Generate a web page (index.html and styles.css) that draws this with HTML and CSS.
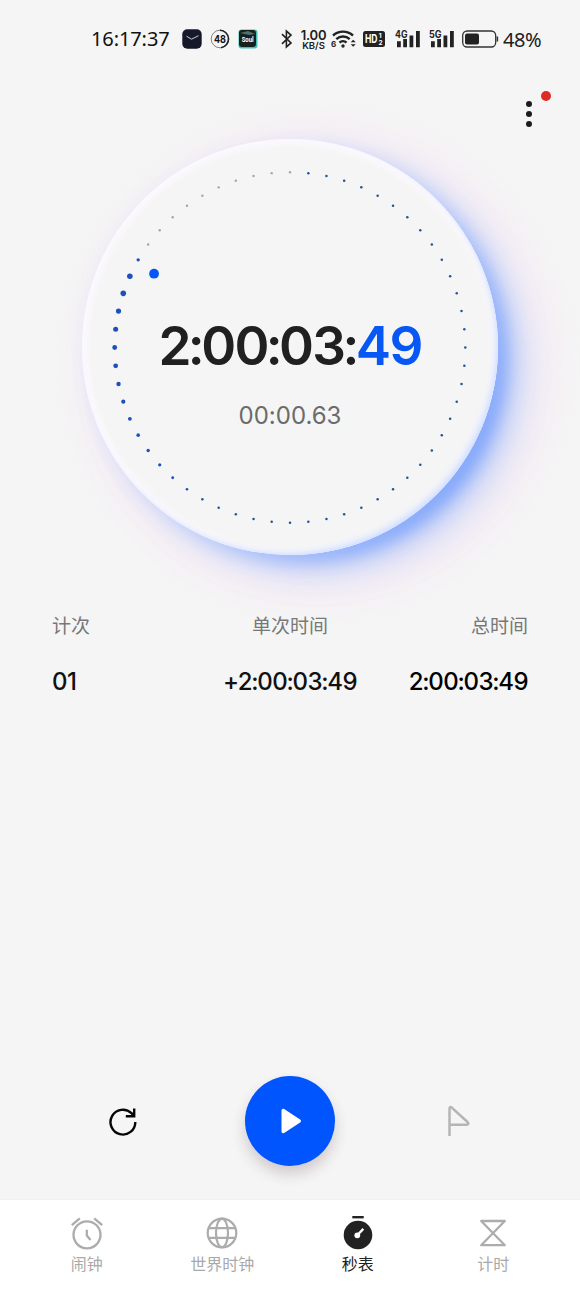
FILE: index.html
```html
<!DOCTYPE html>
<html lang="zh-CN">
<head>
<meta charset="utf-8">
<title>秒表</title>
<link rel="stylesheet" href="styles.css">
</head>
<body>
<div class="screen">
  <div class="status">
    <span class="clock">16:17:37</span>
    <svg class="app-clock" width="20" height="20" viewBox="0 0 20 20"><rect x=".3" y=".3" width="19.4" height="19.4" rx="5" fill="#17192b"/><path d="M4.5 7.2l5 3 7-3.5" fill="none" stroke="#c8ccd6" stroke-width="1"/></svg>
    <svg class="app-48" width="20" height="20" viewBox="0 0 20 20"><circle cx="10" cy="10" r="8.8" fill="none" stroke="#666" stroke-width=".8"/><path d="M10 1.2a8.8 8.8 0 0 1 1 17.5" fill="none" stroke="#222" stroke-width="1.6"/><text class="badge-num" x="10" y="13.8" text-anchor="middle" textLength="12" lengthAdjust="spacingAndGlyphs">48</text></svg>
    <svg class="app-soul" width="20" height="20" viewBox="0 0 20 20"><rect x=".5" y=".5" width="19" height="19" rx="3" fill="#45bfb5"/><rect x="1" y="1" width="17" height="17" rx="3" fill="#14211f"/><path d="M2 4l8-2 7 3-6 1z" fill="#53716c"/><text class="soul-text" x="9.700" y="12.800" text-anchor="middle" textLength="12" lengthAdjust="spacingAndGlyphs">Soul</text></svg>
    <svg class="bt" width="12" height="20" viewBox="0 0 12 20"><path d="M1 5.200l9 8.700-4.600 4V2.100l4.600 4L1 14.800" fill="none" stroke="#222" stroke-width="1.600"/></svg>
    <span class="speed"><b>1.00</b><i>KB/S</i></span>
    <svg class="wifi" width="26" height="20" viewBox="0 0 26 20"><g fill="none" stroke="#222" stroke-width="2.400"><path d="M2 6.500a14.800 14.800 0 0 1 20 0"/><path d="M5.300 10.200a9.800 9.800 0 0 1 13.400 0"/><path d="M8.500 13.700a5 5 0 0 1 7 0"/></g><circle cx="12" cy="17" r="1.700" fill="#222"/><text class="tiny" x="0" y="18">6</text><path d="M19.700 13.200h5L22.200 10.700zM19.700 15.200h5l-2.500 2.500z" fill="#222"/></svg>
    <svg class="hd" width="22" height="16" viewBox="0 0 22 16"><rect width="22" height="16" rx="2.500" fill="#222"/><text class="hd-text" x="2" y="12.300" textLength="12.500" lengthAdjust="spacingAndGlyphs">HD</text><text class="hd-num" x="15.800" y="7.300">1</text><text class="hd-num" x="15.500" y="14.200">2</text></svg>
    <svg class="sig sig-a" width="26" height="20" viewBox="0 0 26 20"><text class="net" x="0" y="8.500" textLength="12.500" lengthAdjust="spacingAndGlyphs">4G</text><path d="M2 12.300h3.800v5.900H2zM8.200 10h3.800v8.200H8.200zM14.500 6.500h3.800v11.700h-3.800zM21 2h3.800v16.200h-3.800z" fill="#222"/></svg>
    <svg class="sig" width="26" height="20" viewBox="0 0 26 20"><text class="net" x="0" y="8.500" textLength="12.500" lengthAdjust="spacingAndGlyphs">5G</text><path d="M2 12.300h3.800v5.900H2zM8.200 10h3.800v8.200H8.200zM14.500 6.500h3.800v11.700h-3.800zM21 2h3.800v16.200h-3.800z" fill="#222"/></svg>
    <svg class="battery" width="37" height="18" viewBox="0 0 37 18"><rect x=".7" y="1" width="33" height="16" rx="4.500" fill="none" stroke="#333" stroke-width="1.300"/><rect x="3" y="3.500" width="14" height="11" rx="2" fill="#222"/><path d="M35.400 6.500v5" stroke="#333" stroke-width="1.500"/></svg>
    <span class="percent">48%</span>
  </div>

  <div class="toolbar">
    <div class="more"><i></i><i></i><i></i><b class="notice"></b></div>
  </div>

  <div class="dial-row">
    <div class="dial">
      <svg class="ticks" viewBox="-208 -208 416 416"></svg>
      <div class="elapsed">2<s>:</s>00<s>:</s>03<s>:</s><span class="cents">49</span></div>
      <div class="lap-time">00:00.63</div>
    </div>
  </div>

  <div class="laps">
    <span class="th">计次</span><span class="th mid">单次时间</span><span class="th end">总时间</span>
    <span class="td">01</span><span class="td mid">+2<s>:</s>00<s>:</s>03<s>:</s>49</span><span class="td end total">2<s>:</s>00<s>:</s>03<s>:</s>49</span>
  </div>

  <div class="controls">
    <svg class="reset" width="30" height="30" viewBox="0 0 30 30" fill="none" stroke="#050505" stroke-width="2.400"><path d="M27.300 15A12.400 12.400 0 1 1 23.500 6.200L25.500 8.400"/><path d="M26.200 1.400V9.200H17.800"/></svg>
    <div class="play"><svg width="22" height="28" viewBox="0 0 22 28"><path d="M4.200 3.500v21l16-10.500z" fill="#fff" stroke="#fff" stroke-width="3.400" stroke-linejoin="round"/></svg></div>
    <svg class="flag" width="24" height="32" viewBox="0 0 24 32" fill="none" stroke="#b5b5b5" stroke-width="2.500" stroke-linejoin="round"><path d="M2.500 31V4Q2.500 .8 5 2.800L20.500 17Q22.500 19.700 19.500 19.700H2.500"/></svg>
  </div>

  <div class="tabs">
    <div class="tab">
      <svg width="36" height="36" viewBox="0 0 36 36" fill="none" stroke="#acacac" stroke-width="2.300"><circle cx="18" cy="18.800" r="13.500"/><path d="M2.800 9.200l8-6.800M25.200 2.400l8 6.800M17.800 13.800v5.700l3.700 4.500"/></svg>
      <span>闹钟</span>
    </div>
    <div class="tab">
      <svg width="36" height="36" viewBox="0 0 36 36" fill="none" stroke="#acacac" stroke-width="2.200"><circle cx="18" cy="17" r="14.300"/><ellipse cx="18" cy="17" rx="6" ry="14.300"/><path d="M4.500 12.200h27M4.500 21.800h27"/></svg>
      <span>世界时钟</span>
    </div>
    <div class="tab active">
      <svg width="36" height="36" viewBox="0 0 36 36"><circle cx="18" cy="19" r="14.300" fill="#222"/><path d="M12.300 1.200h11.400" stroke="#222" stroke-width="2.400"/><path d="M17.300 19.300l6-6.400" stroke="#fff" stroke-width="2.300"/><circle cx="17.300" cy="19.300" r="2.900" fill="#fff"/></svg>
      <span>秒表</span>
    </div>
    <div class="tab">
      <svg width="36" height="36" viewBox="0 0 36 36" fill="none" stroke="#acacac" stroke-width="2.300" stroke-linejoin="round"><path d="M6.200 5h23.600L6.200 29.200h23.600z"/></svg>
      <span>计时</span>
    </div>
  </div>
</div>
<script src="ticks.js"></script>
</body>
</html>
```
FILE: styles.css
```css
* { box-sizing: border-box; }
body {
  margin: 0;
  background: #f5f5f5;
  color: #202020;
  font-family: Inter, "Noto Sans CJK SC", sans-serif;
  font-feature-settings: "calt" 0;
}
.screen {
  width: 580px;
  height: 1289px;
  overflow: hidden;
  display: flex;
  flex-direction: column;
}
svg { display: block; flex: none; }
s { text-decoration: none; }

.status {
  height: 78px;
  padding-left: 91px;
  display: flex;
  align-items: center;
  white-space: nowrap;
}
.clock {
  width: 91px;
  font: 400 20px/24px "Noto Sans", sans-serif;
  letter-spacing: -0.1px;
  color: #111;
}
.app-48 { margin-left: 8px; }
.app-soul { margin-left: 8px; }
.badge-num { font: 700 11px Inter, sans-serif; fill: #111; }
.soul-text { font: 700 8px Roboto, sans-serif; fill: #fff; }
.bt { margin-left: 23px; }
.speed {
  width: 27px;
  margin-left: 7px;
  display: flex;
  flex-direction: column;
  align-items: center;
}
.speed b { font: 600 13px/12px Inter, sans-serif; letter-spacing: -0.2px; }
.speed i { font: 600 9.500px/9px Inter, sans-serif; }
.wifi { margin-left: 4px; }
.tiny { font: 700 8px Inter, sans-serif; fill: #222; }
.hd { margin-left: 6px; }
.hd-text { font: 700 12px Inter, sans-serif; fill: #fff; }
.hd-num { font: 700 6.500px Inter, sans-serif; fill: #fff; }
.sig { margin-left: 8px; }
.sig-a { margin-left: 10px; }
.net { font: 700 10px Inter, sans-serif; fill: #222; }
.battery { margin-left: 7px; }
.percent {
  margin-left: 4px;
  font: 400 20px/24px "Noto Sans", sans-serif;
  letter-spacing: -0.4px;
  padding-top: 2px;
}

.toolbar {
  height: 61px;
  padding: 23px 48.500px 0 0;
  display: flex;
  justify-content: flex-end;
}
.more {
  position: relative;
  width: 6px;
  height: 26px;
  display: flex;
  flex-direction: column;
  gap: 4px;
}
.more i {
  width: 6px;
  height: 6px;
  border-radius: 50%;
  background: #1c1c1c;
}
.notice {
  position: absolute;
  top: -10px;
  left: 15.500px;
  width: 10px;
  height: 10px;
  border-radius: 50%;
  background: #e12a24;
}

.dial-row {
  height: 461px;
  display: flex;
  justify-content: center;
}
.dial {
  position: relative;
  width: 416px;
  height: 416px;
  border-radius: 50%;
  background: #f5f5f5;
  display: flex;
  flex-direction: column;
  align-items: center;
  padding-top: 178px;
  box-shadow:
    inset -4px -4px 6px -2px rgba(190, 212, 255, 0.75),
    inset 0 0 6px 5px #fcf9ff,
    0 2px 14px 0 rgba(225, 228, 255, 0.4),
    16px 12px 24px -11px rgba(40, 110, 255, 0.68),
    26px 18px 46px -6px rgba(70, 130, 255, 0.34),
    27px 16px 22px 36px rgba(255, 232, 244, 0.3);
}
.ticks {
  position: absolute;
  inset: 0;
  width: 416px;
  height: 416px;
}
.tick { fill: #21529b; }
.tick-idle { fill: #a5a5a5; }
.tick-trail { fill: #1d50bd; }
.hand { fill: #0757f5; }
.elapsed {
  font-size: 53px;
  font-weight: 600;
  line-height: 58px;
  letter-spacing: -1.700px;
  white-space: nowrap;
}
.elapsed s { margin: 0 -1.900px; }
.cents { color: #0757f5; }
.lap-time {
  margin-top: 26px;
  font-size: 24px;
  line-height: 30px;
  color: #6b6b6b;
}

.laps {
  height: 476px;
  padding: 8px 52px 0;
  display: grid;
  grid-template-columns: 100px 276px 100px;
  grid-template-rows: 32px 82px;
  align-items: center;
  white-space: nowrap;
}
.th { font-size: 19px; font-weight: 400; color: #777; }
.td { font-size: 24px; font-weight: 500; letter-spacing: -0.500px; color: #111; }
.td s { margin: 0 -0.800px; }
.mid { text-align: center; }
.end { justify-self: end; }
.total { color: #000; }

.controls {
  height: 123px;
  padding: 0 109px 0 108px;
  display: grid;
  grid-template-columns: 137px 1fr 24px;
  align-items: start;
}
.reset { margin-top: 31px; }
.play {
  width: 90px;
  height: 90px;
  border-radius: 50%;
  background: #0055ff;
  display: flex;
  align-items: center;
  justify-content: center;
  box-shadow: 0 8px 14px rgba(80, 50, 60, 0.22);
}
.flag { margin-top: 29px; }

.tabs {
  height: 90px;
  padding: 16px 19px 0;
  background: #fff;
  border-top: 1px solid #f0f0f0;
  display: grid;
  grid-template-columns: repeat(4, 1fr);
}
.tab {
  display: flex;
  flex-direction: column;
  align-items: center;
  font-size: 16px;
  line-height: 24px;
  color: #a9a9a9;
}
.active { color: #202020; }
```
FILE: ticks.js
```js
const face = document.querySelector(".ticks");
const NS = "http://www.w3.org/2000/svg";
// Radii of the growing trail behind the hand, starting at tick 36.
const trail = [1.3, 1.4, 1.6, 1.7, 1.8, 1.9, 2.1, 2.2, 2.4, 2.4, 2.5, 2.6, 2.8, 2.8, 1.7];

function dot(name, degrees, distance, radius) {
  const angle = degrees * Math.PI / 180;
  const c = document.createElementNS(NS, "circle");
  c.setAttribute("class", name);
  c.setAttribute("cx", (Math.sin(angle) * distance).toFixed(2));
  c.setAttribute("cy", (-Math.cos(angle) * distance + 0.5).toFixed(2));
  c.setAttribute("r", radius);
  face.appendChild(c);
}

for (let i = 0; i < 60; i++) {
  if (i === 0 || i > 50) dot("tick-idle", i * 6, 175.3, 1.2);
  else if (i < 36) dot("tick", i * 6, 175.3, 1.25);
  else dot("tick-trail", i * 6, 175.3, trail[i - 36]);
}
dot("hand", 298.5, 154.7, 4.9);
```
